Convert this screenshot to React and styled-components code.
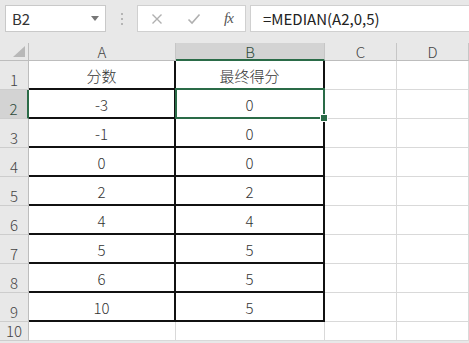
import React from "react";
import styled, { createGlobalStyle } from "styled-components";

const Global = createGlobalStyle`
  html, body { margin: 0; padding: 0; background: #e8e8e8; }
  body { font-family: "Noto Sans CJK SC", "Noto Sans", sans-serif; }
`;

const GREEN = "#2a6b47";
const FONT = `"Noto Sans CJK SC", "Noto Sans", sans-serif`;

const Page = styled.div`
  width: 469px;
  height: 343px;
  overflow: hidden;
  background: #e8e8e8;
`;

const Toolbar = styled.div`
  height: 43px;
  box-sizing: border-box;
  padding: 5px 0 0 5px;
  display: flex;
  align-items: flex-start;
`;

const NameBox = styled.div`
  width: 101px;
  height: 27px;
  box-sizing: border-box;
  background: #fff;
  border: 1px solid #c9c9c9;
  display: flex;
  align-items: center;
  justify-content: space-between;
  padding: 0 6px 0 6px;
  font-family: ${FONT};
  font-size: 15px;
  color: #333;
`;

const Caret = styled.span`
  width: 0;
  height: 0;
  border-left: 4px solid transparent;
  border-right: 4px solid transparent;
  border-top: 5px solid #777;
`;

const Grip = styled.div`
  width: 31px;
  height: 27px;
  display: flex;
  flex-direction: column;
  align-items: center;
  justify-content: center;
  gap: 3px;
`;

const Dot = styled.span`
  width: 2px;
  height: 2px;
  background: #b5b5b5;
`;

const FxGroup = styled.div`
  width: 109px;
  height: 27px;
  box-sizing: border-box;
  background: #fff;
  border: 1px solid #d0d0d0;
  display: grid;
  grid-template-columns: 38px 36px 1fr;
  align-items: center;
  justify-items: center;
  margin-right: 4px;
`;

const FxLabel = styled.span`
  font-family: "Liberation Serif", "DejaVu Serif", serif;
  font-style: italic;
  font-size: 15px;
  color: #555;
  letter-spacing: -1px;
`;

const FormulaBar = styled.div`
  flex: 1;
  height: 27px;
  box-sizing: border-box;
  background: #fff;
  border: 1px solid #d0d0d0;
  border-right: none;
  display: flex;
  align-items: center;
  padding-left: 12px;
  font-family: ${FONT};
  font-size: 15px;
  color: #222;
`;

const Sheet = styled.div`
  display: grid;
  grid-template-columns: 29px 147px 149px 72px 72px;
  grid-template-rows: 18px repeat(9, 29px) 19px;
  background: #fff;
`;

const Corner = styled.div`
  background: #e8e8e8;
  border-right: 1px solid #bdbdbd;
  border-bottom: 1px solid #bdbdbd;
  box-sizing: border-box;
  display: flex;
  align-items: flex-end;
  justify-content: flex-end;
  padding: 0 3px 3px 0;
`;

const ColHeader = styled.div`
  background: ${(p) => (p.$selected ? "#d3d3d3" : "#e8e8e8")};
  border-right: 1px solid #c6c6c6;
  border-bottom: ${(p) => (p.$selected ? `2px solid ${GREEN}` : "1px solid #bdbdbd")};
  box-sizing: border-box;
  display: flex;
  align-items: center;
  justify-content: center;
  font-family: ${FONT};
  font-size: 15px;
  font-weight: 300;
  line-height: 1;
  color: ${(p) => (p.$selected ? "#2d4a3a" : "#444")};
`;

const RowHeader = styled.div`
  background: ${(p) => (p.$selected ? "#d3d3d3" : "#e8e8e8")};
  border-right: ${(p) => (p.$selected ? `2px solid ${GREEN}` : "1px solid #bdbdbd")};
  border-bottom: 1px solid #cdcdcd;
  box-sizing: border-box;
  display: flex;
  align-items: flex-end;
  justify-content: center;
  padding-bottom: 1px;
  font-family: ${FONT};
  font-size: 15px;
  font-weight: 300;
  line-height: 1.1;
  color: ${(p) => (p.$selected ? "#2d4a3a" : "#444")};
`;

const Cell = styled.div`
  position: relative;
  box-sizing: border-box;
  border-right: ${(p) => (p.$boxed ? "2px solid #111" : "1px solid #d9d9d9")};
  border-bottom: ${(p) => (p.$boxed ? "2px solid #111" : "1px solid #d9d9d9")};
  display: flex;
  align-items: flex-end;
  justify-content: center;
  padding-bottom: 3px;
  font-family: ${FONT};
  font-size: 15px;
  font-weight: 300;
  line-height: 1.2;
  color: #333;
`;

const Selection = styled.div`
  position: absolute;
  top: -2px;
  left: -1px;
  right: -2px;
  bottom: -2px;
  border: 2px solid ${GREEN};
  z-index: 2;
  pointer-events: none;
`;

const FillHandle = styled.div`
  position: absolute;
  right: -5px;
  bottom: -5px;
  width: 6px;
  height: 6px;
  background: ${GREEN};
  border: 1px solid #fff;
  z-index: 3;
`;

const colA = ["分数", "-3", "-1", "0", "2", "4", "5", "6", "10"];
const colB = ["最终得分", "0", "0", "0", "2", "4", "5", "5", "5"];

const XIcon = () => (
  <svg width="12" height="12" viewBox="0 0 12 12">
    <path d="M1.5 1.5 L10.5 10.5 M10.5 1.5 L1.5 10.5" stroke="#b0b0b0" strokeWidth="1.4" fill="none" />
  </svg>
);

const CheckIcon = () => (
  <svg width="14" height="12" viewBox="0 0 14 12">
    <path d="M1.5 6.5 L5 10 L12.5 1.5" stroke="#b0b0b0" strokeWidth="1.6" fill="none" />
  </svg>
);

const CornerTriangle = () => (
  <svg width="12" height="11" viewBox="0 0 12 11">
    <polygon points="12,0 12,11 0,11" fill="#b8b8b8" />
  </svg>
);

export default function App() {
  const rows = [];
  for (let i = 0; i < 10; i++) {
    const n = i + 1;
    const boxed = i < 9;
    rows.push(
      <React.Fragment key={n}>
        <RowHeader $selected={n === 2}>{n}</RowHeader>
        <Cell $boxed={boxed}>{boxed ? colA[i] : ""}</Cell>
        <Cell $boxed={boxed}>
          {boxed ? colB[i] : ""}
          {n === 2 && (
            <Selection>
              <FillHandle />
            </Selection>
          )}
        </Cell>
        <Cell />
        <Cell />
      </React.Fragment>
    );
  }

  return (
    <Page>
      <Global />
      <Toolbar>
        <NameBox>
          <span>B2</span>
          <Caret />
        </NameBox>
        <Grip>
          <Dot />
          <Dot />
          <Dot />
        </Grip>
        <FxGroup>
          <XIcon />
          <CheckIcon />
          <FxLabel>fx</FxLabel>
        </FxGroup>
        <FormulaBar>=MEDIAN(A2,0,5)</FormulaBar>
      </Toolbar>
      <Sheet>
        <Corner>
          <CornerTriangle />
        </Corner>
        <ColHeader>A</ColHeader>
        <ColHeader $selected>B</ColHeader>
        <ColHeader>C</ColHeader>
        <ColHeader>D</ColHeader>
        {rows}
      </Sheet>
    </Page>
  );
}
